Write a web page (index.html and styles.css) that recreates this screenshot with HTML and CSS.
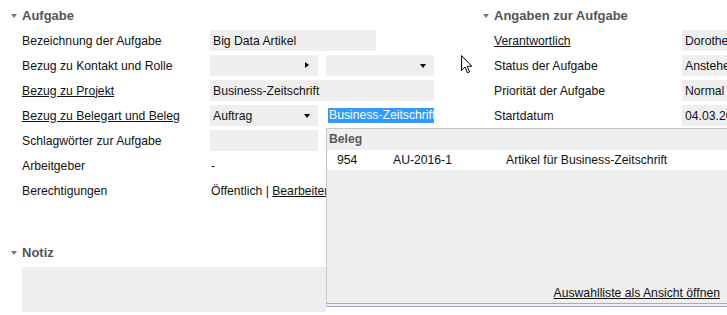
FILE: index.html
```html
<!DOCTYPE html>
<html lang="de">
<head>
  <meta charset="UTF-8">
  <title>Aufgabe - Big Data Artikel</title>
  <link rel="stylesheet" href="styles.css">
</head>
<body>

  <div class="page">
    <div class="top">
      <section class="panel panel-main">
        <h2 class="section-head"><span class="caret"></span>Aufgabe</h2>
        <div class="form">
          <div class="label">Bezeichnung der Aufgabe</div>
          <div class="field"><span class="box wide">Big Data Artikel</span></div>

          <div class="label">Bezug zu Kontakt und Rolle</div>
          <div class="field">
            <span class="box half select"><span class="arrow-right"></span></span>
            <span class="box half select"><span class="arrow-down"></span></span>
          </div>

          <div class="label"><a href="#">Bezug zu Projekt</a></div>
          <div class="field"><span class="box full">Business-Zeitschrift</span></div>

          <div class="label"><a href="#">Bezug zu Belegart und Beleg</a></div>
          <div class="field">
            <span class="box half select">Auftrag<span class="arrow-down"></span></span>
            <span class="box half focused"><span class="selected">Business-Zeitschrift</span><span class="caret-text"></span></span>
          </div>

          <div class="label">Schlagwörter zur Aufgabe</div>
          <div class="field"><span class="box half"></span></div>

          <div class="label">Arbeitgeber</div>
          <div class="field plain">-</div>

          <div class="label">Berechtigungen</div>
          <div class="field plain"><span>Öffentlich | <a href="#">Bearbeiten</a></span></div>
        </div>
      </section>

      <section class="panel panel-side">
        <h2 class="section-head"><span class="caret"></span>Angaben zur Aufgabe</h2>
        <div class="form">
          <div class="label"><a href="#">Verantwortlich</a></div>
          <div class="field"><span class="box full">Dorothea Müller</span></div>

          <div class="label">Status der Aufgabe</div>
          <div class="field"><span class="box full">Anstehend</span></div>

          <div class="label">Priorität der Aufgabe</div>
          <div class="field"><span class="box full">Normal</span></div>

          <div class="label">Startdatum</div>
          <div class="field"><span class="box full">04.03.2016</span></div>
        </div>
      </section>
    </div>

    <section class="notes">
      <h2 class="section-head"><span class="caret"></span>Notiz</h2>
      <div class="note-box"></div>
    </section>

    <!-- Auswahlliste unter dem Beleg-Feld -->
    <div class="popup">
      <div class="popup-inner">
        <div class="popup-head">Beleg</div>
        <div class="popup-row">
          <span>954</span>
          <span>AU-2016-1</span>
          <span>Artikel für Business-Zeitschrift</span>
        </div>
        <div class="popup-foot"><a href="#">Auswahlliste als Ansicht öffnen</a></div>
      </div>
    </div>

    <svg class="pointer" width="12" height="19" viewBox="0 0 12 19">
      <path d="M0.5 0.5 L0.5 15.5 L4 12 L6.5 17.8 L8.6 16.9 L6.2 11.3 L10.8 11.3 Z" fill="#fff" stroke="#000" stroke-width="1" stroke-linejoin="miter"/>
    </svg>
  </div>

</body>
</html>
```

FILE: styles.css
```css
body {
  margin: 0;
  font-family: "Liberation Sans", Arial, sans-serif;
  font-size: 12.2px;
  color: #111;
  background-color: white;
  overflow: hidden;
}

a {
  color: #111;
  text-decoration: underline;
}

.page {
  position: relative;
  width: 727px;
  height: 315px;
  overflow: hidden;
}

.top {
  display: flex;
}

.panel-main {
  width: 472px;
  flex: none;
}

.panel-side {
  flex: 1;
  min-width: 0;
}

.section-head {
  display: flex;
  align-items: center;
  margin: 0 0 5px 0;
  padding: 6px 0 0 11px;
  height: 19px;
  font-size: 13px;
  font-weight: bold;
  color: #555;
}

.caret {
  width: 0;
  height: 0;
  border-left: 3.5px solid transparent;
  border-right: 3.5px solid transparent;
  border-top: 4px solid #777;
  margin-right: 5px;
}

.form {
  display: grid;
  grid-template-columns: 188px 1fr;
  grid-auto-rows: 21px;
  row-gap: 4px;
  padding-left: 22px;
}

.label {
  display: flex;
  align-items: center;
  white-space: nowrap;
}

.field {
  display: flex;
  gap: 8px;
  min-width: 0;
}

.field.plain {
  align-items: center;
  padding-left: 1px;
  white-space: nowrap;
}

.box {
  display: flex;
  align-items: center;
  height: 21px;
  padding: 0 3px;
  background-color: #efefef;
  white-space: nowrap;
  overflow: hidden;
  box-sizing: border-box;
}

.box.wide {
  width: 166px;
}

.box.half {
  width: 108px;
}

.box.full {
  width: 224px;
}

.select {
  position: relative;
}

.arrow-down {
  position: absolute;
  right: 8px;
  top: 9px;
  width: 0;
  height: 0;
  border-left: 3.5px solid transparent;
  border-right: 3.5px solid transparent;
  border-top: 4px solid #000;
}

.arrow-right {
  position: absolute;
  right: 9px;
  top: 7px;
  width: 0;
  height: 0;
  border-top: 3.5px solid transparent;
  border-bottom: 3.5px solid transparent;
  border-left: 4px solid #000;
}

.box.focused {
  background-color: white;
  padding: 0 2px;
}

.selected {
  background-color: #3399ff;
  color: white;
  line-height: 15px;
  padding: 0 1px;
}

.caret-text {
  width: 1px;
  height: 15px;
  background-color: #000;
}

.notes {
  margin-top: 36px;
}

.note-box {
  margin-top: 1px;
  margin-left: 22px;
  height: 45px;
  background-color: #efefef;
}

.popup {
  position: absolute;
  left: 326px;
  top: 128px;
  width: 401px;
  padding-bottom: 10px;
  background-color: white;
}

.popup-inner {
  display: flex;
  flex-direction: column;
  height: 174px;
  background-color: #efefef;
  border-top: 1px solid #c8c8c8;
  border-left: 1px solid #c8c8c8;
  border-bottom: 4px double #a9a5d6;
}

.popup-head {
  height: 21px;
  line-height: 20px;
  padding-left: 2px;
  font-weight: bold;
  color: #5a5a5a;
}

.popup-row {
  display: grid;
  grid-template-columns: 56px 113px 1fr;
  height: 20px;
  line-height: 20px;
  padding-left: 10px;
  background-color: white;
}

.popup-foot {
  margin-top: auto;
  padding: 0 7px 3px 0;
  text-align: right;
  line-height: 14px;
}

.pointer {
  position: absolute;
  left: 461px;
  top: 55px;
}
```
